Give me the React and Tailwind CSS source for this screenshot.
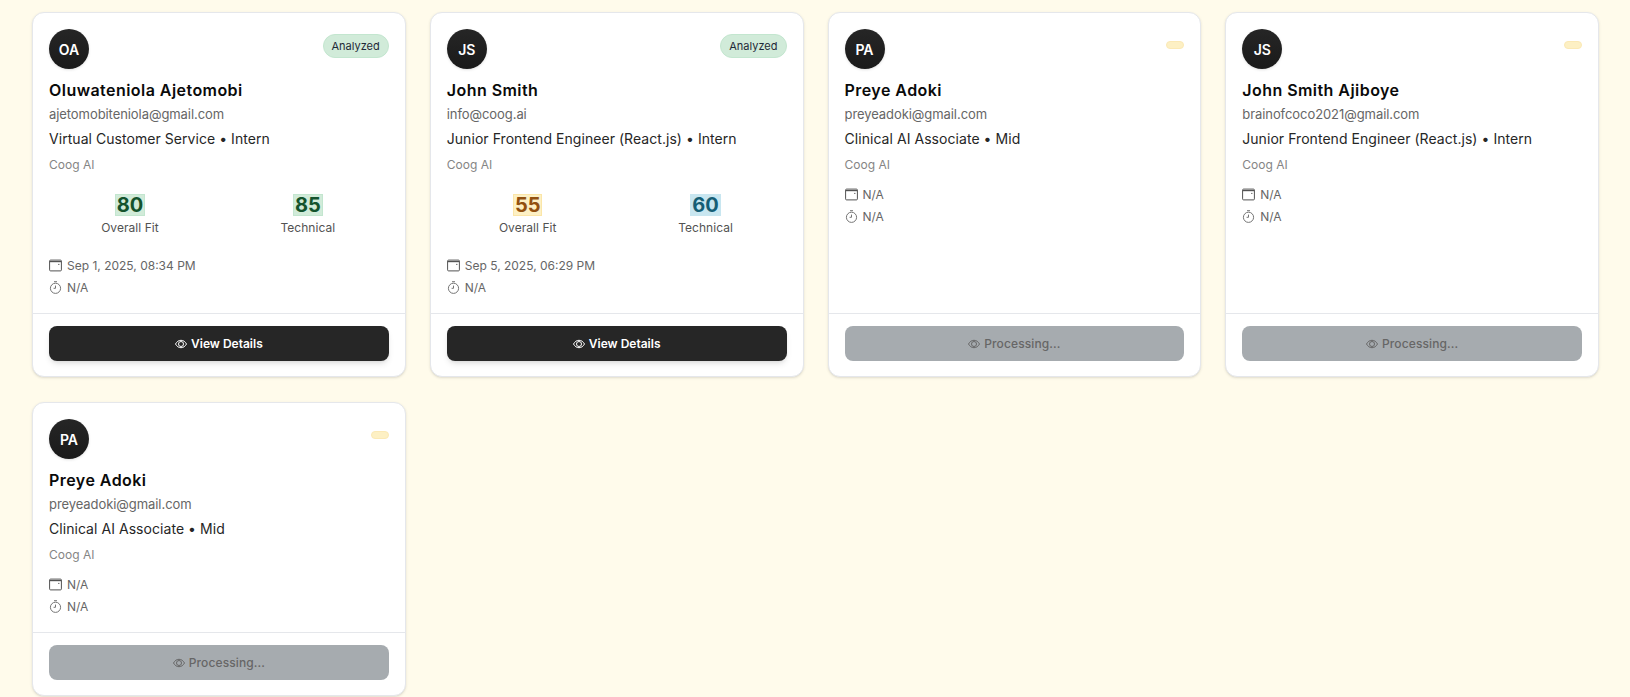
import React from 'react';

const candidates = [
  { initials: 'OA', name: 'Oluwateniola Ajetomobi', email: 'ajetomobiteniola@gmail.com', role: 'Virtual Customer Service • Intern', analyzed: true, overall: 80, technical: 85, overallTone: 'green', technicalTone: 'green', date: 'Sep 1, 2025, 08:34 PM' },
  { initials: 'JS', name: 'John Smith', email: 'info@coog.ai', role: 'Junior Frontend Engineer (React.js) • Intern', analyzed: true, overall: 55, technical: 60, overallTone: 'yellow', technicalTone: 'blue', date: 'Sep 5, 2025, 06:29 PM' },
  { initials: 'PA', name: 'Preye Adoki', email: 'preyeadoki@gmail.com', role: 'Clinical AI Associate • Mid', analyzed: false, date: 'N/A' },
  { initials: 'JS', name: 'John Smith Ajiboye', email: 'brainofcoco2021@gmail.com', role: 'Junior Frontend Engineer (React.js) • Intern', analyzed: false, date: 'N/A' },
  { initials: 'PA', name: 'Preye Adoki', email: 'preyeadoki@gmail.com', role: 'Clinical AI Associate • Mid', analyzed: false, date: 'N/A' },
];

const tones = {
  green: 'bg-[#d1ebd9] border-[#c3e6cf] text-[#14532d]',
  yellow: 'bg-[#fdf0c4] border-[#fbe6a8] text-[#92500f]',
  blue: 'bg-[#c8e6f0] border-[#c8e6f0] text-[#155e75]',
};

function CalendarIcon() {
  return (
    <svg width="13" height="13" viewBox="0 0 13 13" fill="none" stroke="#525252" className="shrink-0">
      <rect x="0.6" y="1.1" width="11.8" height="10.8" rx="1" strokeWidth="1" />
      <path d="M0.6 2.6H12.4" strokeWidth="1.2" />
      <path d="M9.2 5.4H10.4" strokeWidth="1" />
    </svg>
  );
}

function TimerIcon() {
  return (
    <svg width="13" height="13" viewBox="0 0 13 13" fill="none" stroke="#757575" strokeWidth="1" className="shrink-0">
      <circle cx="6.5" cy="7.3" r="5.1" />
      <path d="M5 0.7H8M6.5 7.3V4.6M6.5 7.3H4.6" />
    </svg>
  );
}

function EyeIcon({ color }) {
  return (
    <svg width="12" height="10" viewBox="0 0 12 10" fill="none" stroke={color} strokeWidth="1" className="shrink-0">
      <path d="M0.5 5C1.8 2.6 3.7 1.3 6 1.3C8.3 1.3 10.2 2.6 11.5 5C10.2 7.4 8.3 8.7 6 8.7C3.7 8.7 1.8 7.4 0.5 5Z" />
      <circle cx="6" cy="5" r="2.5" />
    </svg>
  );
}

function Score({ value, tone, label }) {
  return (
    <div className="flex flex-col items-center">
      <span className={`h-[22px] px-[1px] border text-[20px] leading-[20px] font-bold ${tones[tone]}`}>{value}</span>
      <span className="mt-[4px] text-[12px] leading-[16px] tracking-[0.05px] text-[#525252]">{label}</span>
    </div>
  );
}

function CandidateCard({ candidate }) {
  const { initials, name, email, role, analyzed, overall, technical, overallTone, technicalTone, date } = candidate;
  return (
    <div className="flex flex-col bg-white border border-[#e5e7eb] rounded-xl shadow-sm">
      <div className="flex-1 px-4 pt-4">
        <div className="flex justify-between items-start">
          <div className="w-10 h-10 rounded-full bg-gradient-to-b from-[#262626] to-[#1a1a1a] shadow-sm flex items-center justify-center text-white text-[14px] font-semibold">
            {initials}
          </div>
          <div className="mt-[5px] h-6 flex items-start">
            {analyzed ? (
              <span className="px-2 py-[3px] rounded-full bg-[#d1ebd9] border border-[#c3e6cf] text-[11px] leading-4 text-[#1f2937]">Analyzed</span>
            ) : (
              <span className="block mt-[7px] w-[18px] h-2 rounded-full bg-[#fdf0c4] border border-[#fbe9b5]" />
            )}
          </div>
        </div>
        <h3 className="mt-[9px] text-[16px] leading-6 font-semibold text-[#0a0a0a] tracking-[0.45px]">{name}</h3>
        <p className="mt-[2px] text-[13px] leading-5 tracking-[-0.07px] text-[#666666]">{email}</p>
        <p className="mt-[5px] text-[14px] leading-5 tracking-[0.05px] text-[#262626]">{role}</p>
        <p className="mt-[6px] text-[12px] leading-5 text-[#858585]">Coog AI</p>
        {analyzed && (
          <div className="mt-[19px] grid grid-cols-2 gap-4">
            <Score value={overall} tone={overallTone} label="Overall Fit" />
            <Score value={technical} tone={technicalTone} label="Technical" />
          </div>
        )}
        <div className={`${analyzed ? 'mt-[21px]' : 'mt-[11px]'} flex flex-col gap-[5px] text-[12px] leading-[17px] text-[#666666]`}>
          <div className="flex items-center gap-[5px]"><CalendarIcon />{date}</div>
          <div className="flex items-center gap-[5px]"><TimerIcon />N/A</div>
        </div>
      </div>
      <div className="mt-[17px] px-4 pt-3 pb-[15px] border-t border-[#e5e7eb]">
        {analyzed ? (
          <button className="w-full h-[35px] rounded-lg bg-[#262626] shadow-md flex items-center justify-center gap-1 text-white text-[12px] font-semibold">
            <EyeIcon color="#ffffff" />View Details
          </button>
        ) : (
          <button className="w-full h-[35px] rounded-lg bg-[#a6abaf] flex items-center justify-center gap-1 text-[#666666] text-[12px] font-medium tracking-[0.1px]">
            <EyeIcon color="#666666" />Processing...
          </button>
        )}
      </div>
    </div>
  );
}

export default function App() {
  return (
    <div className="min-h-screen bg-[#fffbeb] pl-8 pr-[31px] pt-3 font-['Inter',sans-serif]">
      <div className="grid grid-cols-4 gap-x-6 gap-y-[25px]">
        {candidates.map((c, i) => <CandidateCard key={i} candidate={c} />)}
      </div>
    </div>
  );
}
